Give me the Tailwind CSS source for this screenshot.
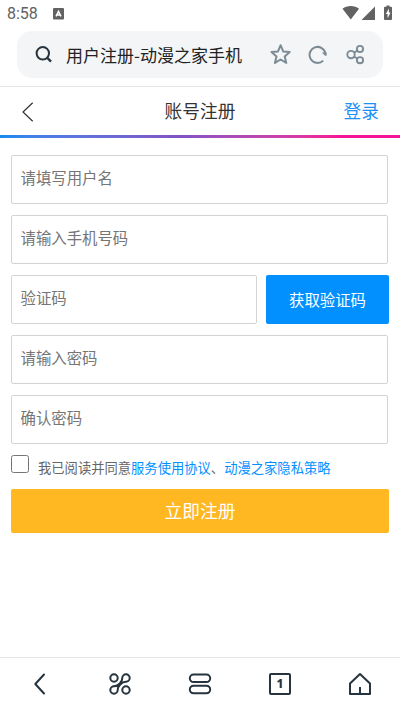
<!DOCTYPE html>
<html lang="zh-CN">
  <head>
    <meta charset="UTF-8" />
    <meta name="viewport" content="width=device-width, initial-scale=1.0" />
    <title>用户注册-动漫之家手机</title>
    <script src="https://cdn.jsdelivr.net/npm/@tailwindcss/browser@4"></script>
  </head>
  <body
    class="flex h-[711px] w-[400px] flex-col overflow-hidden bg-white font-['Noto_Sans_CJK_SC',sans-serif] text-[#333]"
  >
    <!-- Status bar -->
    <div class="flex h-[31px] shrink-0 items-start justify-between text-[#626262]">
      <div class="flex items-start pl-[7px]">
        <span class="w-[46px] pt-[5px] font-[Roboto,sans-serif] text-[16px] leading-[18px]">8:58</span>
        <svg class="mt-2 h-[12px] w-[11px]" viewBox="0 0 11 12">
          <rect width="11" height="11.5" rx="1" fill="#626262" />
          <path d="M3 8.4L5.5 3.4L8 8.4M3.8 7H7.2" fill="none" stroke="#fff" stroke-width="1.5" />
        </svg>
      </div>
      <div class="flex items-start pr-[7px]">
        <svg class="mt-[5px] h-4 w-[51px]" viewBox="0 0 51 16" fill="#626262">
          <path d="M0.5 3.7C5 0.2 12.5 0.2 17 3.7L8.8 14.5Z" />
          <path d="M33 1.5V15H19.5Z" />
          <path d="M43 1.8H44.5V0.5H47.5V1.8H49Q50 1.8 50 2.8V14Q50 15 49 15H43Q42 15 42 14V2.8Q42 1.8 43 1.8Z" />
          <path d="M46.9 3.5L43.8 9H45.6V13.2L48.6 7.5H46.9Z" fill="#fff" />
        </svg>
      </div>
    </div>

    <!-- Address bar -->
    <div class="h-14 shrink-0 border-b border-[#e6e6e6] px-[17px]">
      <div class="flex h-[47px] items-center rounded-[15px] bg-[#f3f5f7]">
        <svg class="ml-[18px] h-[18px] w-[18px] shrink-0" viewBox="0 0 18 18" fill="none" stroke="#27343d" stroke-width="2">
          <circle cx="7.8" cy="7.3" r="6.2" />
          <path d="M12 11.5L16 15.7" stroke-width="2.4" />
        </svg>
        <span class="ml-[13px] w-[200px] whitespace-nowrap pt-px text-[17px] leading-6 text-[#222]">用户注册-动漫之家手机</span>
        <svg class="ml-[3px] h-[22px] w-[22px]" viewBox="0 0 22 22" fill="none" stroke="#7d8b95" stroke-width="2" stroke-linejoin="round">
          <path d="M11.6 1.2L14.2 7.4L20.7 8L15.7 12.4L17.3 18.9L11.6 15.5L5.9 18.9L7.5 12.4L2.5 8L9 7.4Z" />
        </svg>
        <svg class="ml-[17px] h-5 w-5" viewBox="0 0 20 20" fill="none" stroke="#7d8b95" stroke-width="2">
          <path d="M15.2 15.6A8 8 0 1 1 17.5 8.8" />
          <path d="M13.8 7.5H18.6V10.8H17.1Z" fill="#7d8b95" stroke="none" />
        </svg>
        <svg class="ml-[18px] h-5 w-5" viewBox="0 0 20 20" fill="none" stroke="#7d8b95" stroke-width="1.9">
          <circle cx="5" cy="9.6" r="3.7" />
          <circle cx="14" cy="4" r="3.1" />
          <circle cx="14" cy="15.2" r="3.1" />
          <path d="M8 7.6L11.4 5.7M8 11.6L11.4 13.5" />
        </svg>
      </div>
    </div>

    <!-- Page header -->
    <header class="grid h-[48px] shrink-0 grid-cols-3 items-center">
      <svg class="ml-[22px] mt-0.5 h-5 w-3" viewBox="0 0 12 20" fill="none" stroke="#333" stroke-width="1.2">
        <path d="M10.7 0.7L1 10L10.7 19.3" />
      </svg>
      <h1 class="pb-0.5 text-center text-[17.7px] leading-6">账号注册</h1>
      <a href="#" class="pb-0.5 pr-[21px] text-right text-[17.7px] leading-6 text-[#1e90f5]">登录</a>
    </header>
    <div class="h-[3px] shrink-0 bg-linear-to-r from-[#1489ef] via-[#8252c4] via-45% to-[#f51496] to-85%"></div>

    <!-- Register form -->
    <form class="flex flex-1 flex-col px-[11px] pt-[17px]">
      <div class="flex flex-col gap-[11px]">
        <input type="text" placeholder="请填写用户名" class="mr-px h-[49px] rounded-[2px] border border-[#d3d3d3] pb-[5px] pl-[8.5px] text-[15.4px] placeholder:text-[#757575]" />
        <input type="tel" placeholder="请输入手机号码" class="mr-px h-[49px] rounded-[2px] border border-[#d3d3d3] pb-[5px] pl-[8.5px] text-[15.4px] placeholder:text-[#757575]" />
        <div class="flex gap-[9px]">
          <input type="text" placeholder="验证码" class="h-[49px] w-[246px] rounded-[2px] border border-[#d3d3d3] pb-[5px] pl-[8.5px] text-[15.4px] placeholder:text-[#757575]" />
          <button type="button" class="h-[49px] flex-1 rounded-[2px] bg-[#0390ff] text-[15.4px] text-white">获取验证码</button>
        </div>
        <input type="password" placeholder="请输入密码" class="mr-px h-[49px] rounded-[2px] border border-[#d3d3d3] pb-[5px] pl-[8.5px] text-[15.4px] placeholder:text-[#757575]" />
        <input type="password" placeholder="确认密码" class="mr-px h-[49px] rounded-[2px] border border-[#d3d3d3] pb-[5px] pl-[8.5px] text-[15.4px] placeholder:text-[#757575]" />
      </div>
      <label class="mt-[11px] flex h-[34px] items-start text-[13.3px] leading-5">
        <input type="checkbox" class="h-[18px] w-[18px] appearance-none rounded-[2.5px] border border-[#767676] bg-white" />
        <span class="ml-[9px] mt-[3px] whitespace-nowrap text-[#666]">我已阅读并同意<a href="#" class="text-[#0390ff]">服务使用协议</a>、<a href="#" class="text-[#0390ff]">动漫之家隐私策略</a></span>
      </label>
      <button type="button" class="h-11 rounded-[2px] bg-[#ffb821] pb-0.5 text-[17.7px] leading-6 text-white">立即注册</button>
    </form>

    <!-- Browser toolbar -->
    <nav class="grid h-[54px] shrink-0 grid-cols-5 place-items-center border-t border-[#e6e6e6] pb-px text-[#27343d]">
      <svg class="h-6 w-6" viewBox="0 0 24 24" fill="none" stroke="currentColor" stroke-width="2" stroke-linecap="round" stroke-linejoin="round">
        <path d="M16 2.5L7.3 12L16 21.5" />
      </svg>
      <svg class="h-6 w-6" viewBox="0 0 24 24" fill="none" stroke="currentColor" stroke-width="2">
        <circle cx="6" cy="6" r="3.7" />
        <circle cx="18" cy="18" r="3.7" />
        <path d="M14.3 6A3.7 3.7 0 1 1 18 9.7C13.5 9.7 9.7 14.3 9.7 18A3.7 3.7 0 1 1 6 14.3C10.5 14.3 14.3 9.7 14.3 6Z" />
      </svg>
      <svg class="h-6 w-6" viewBox="0 0 24 24" fill="none" stroke="currentColor" stroke-width="2">
        <rect x="1.8" y="2.5" width="20.4" height="7.6" rx="3.8" />
        <rect x="1.8" y="13.7" width="20.4" height="7.6" rx="3.8" />
      </svg>
      <div class="flex h-[22px] w-[22px] items-center justify-center rounded-[2px] border-2 border-[#27343d] font-['Noto_Sans',sans-serif] text-[12px] font-extrabold leading-none">1</div>
      <svg class="h-6 w-6" viewBox="0 0 24 24" fill="none" stroke="currentColor" stroke-width="2" stroke-linejoin="round">
        <path d="M2 11.5L12 2L22 11.5V22H2ZM12 15V22" />
      </svg>
    </nav>
  </body>
</html>
